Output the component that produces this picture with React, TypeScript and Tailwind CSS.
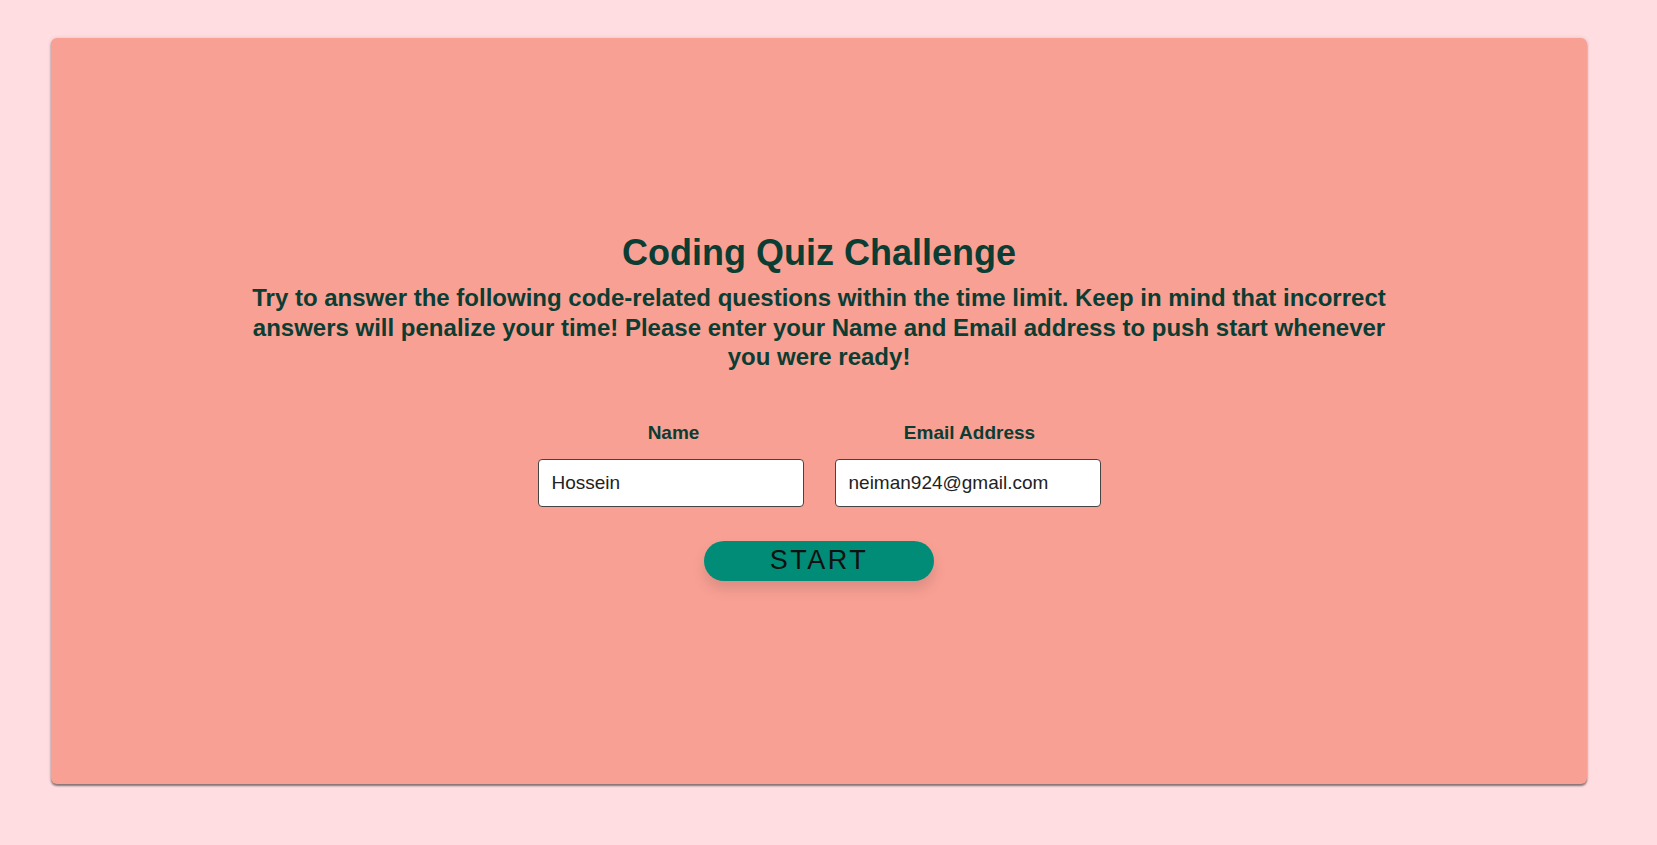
import { useState } from "react"

export default function App() {
  const [name, setName] = useState("Hossein")
  const [email, setEmail] = useState("neiman924@gmail.com")

  return (
    <div className="min-h-screen bg-[#ffdde1] pt-[38px] pb-[61px] font-['Liberation_Sans',Arial,sans-serif]">
      <div className="ml-[51px] w-[1536px] h-[746px] rounded-md bg-[#f9a094] shadow-[0_2px_2px_rgba(0,0,0,0.45),0_0_4px_rgba(0,0,0,0.12)] flex flex-col items-center pt-[194px]">
        <h1 className="text-[36px] leading-[42px] font-bold text-[#0b3d32]">Coding Quiz Challenge</h1>
        <p className="mt-[9px] w-[1180px] text-center text-[24px] leading-[29.6px] font-bold text-[#0b3d32]">
          Try to answer the following code-related questions within the time limit. Keep in mind that incorrect answers will penalize your time! Please enter your Name and Email address to push start whenever you were ready!
        </p>

        {/* name + email fields */}
        <div className="mt-[50px] flex gap-[31px]">
          <div className="flex flex-col items-center">
            <label className="text-[19px] leading-[22px] font-bold text-[#0b3d32] pl-[6px]">Name</label>
            <input
              className="mt-[15px] w-[266px] h-[48px] px-[13px] bg-white border border-[#444] rounded-[4px] text-[19px] text-[#222] outline-none"
              value={name}
              onChange={(e) => setName(e.target.value)}
            />
          </div>
          <div className="flex flex-col items-center">
            <label className="text-[19px] leading-[22px] font-bold text-[#0b3d32] pl-[4px]">Email Address</label>
            <input
              className="mt-[15px] w-[266px] h-[48px] px-[13px] bg-white border border-[#444] rounded-[4px] text-[19px] text-[#222] outline-none"
              value={email}
              onChange={(e) => setEmail(e.target.value)}
            />
          </div>
        </div>

        <button className="mt-[34px] w-[230px] h-[40px] rounded-full bg-[#008c76] text-[27px] leading-none tracking-[2.5px] text-[#111] shadow-[0_8px_14px_rgba(0,0,0,0.12)]">
          START
        </button>
      </div>
    </div>
  )
}
